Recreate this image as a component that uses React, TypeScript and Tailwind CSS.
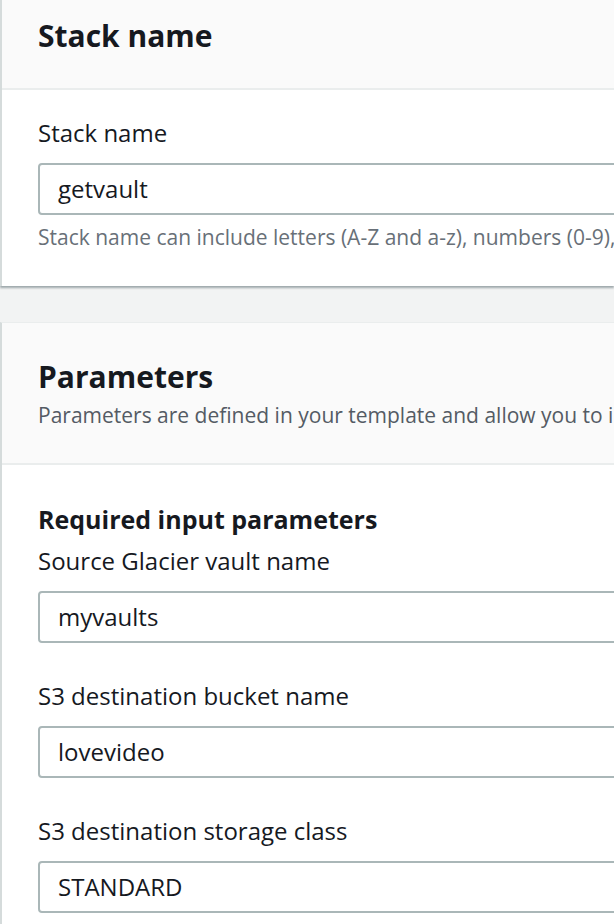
import React from 'react';

const font = { fontFamily: '"Open Sans", "Noto Sans", Arial, sans-serif' };

const Input: React.FC<{ value: string }> = ({ value }) => (
  <div className="mt-[15px] h-[52px] w-[600px] rounded-[4px] border-2 border-[#aab7b8] bg-white pl-[18px] flex items-center text-[24px] text-[#16191f]">
    {value}
  </div>
);

const Field: React.FC<{ label: string; value: string; className?: string }> = ({ label, value, className }) => (
  <div className={className}>
    <div className="text-[24px] leading-[30px] text-[#16191f] whitespace-nowrap">{label}</div>
    <Input value={value} />
  </div>
);

export default function App() {
  return (
    <div className="min-h-[924px] w-[614px] overflow-hidden bg-[#f2f3f3]" style={font}>
      {/* Stack name */}
      <section className="bg-white border-l-2 border-[#d5dbdb] shadow-[0_2px_2px_rgba(0,28,36,0.35)]">
        <div className="h-[90px] bg-[#fafafa] border-b-2 border-[#eaeded] pl-[36px] pt-[18px]">
          <h2 className="text-[30px] font-bold leading-[36px] text-[#16191f] whitespace-nowrap">Stack name</h2>
        </div>
        <div className="pl-[36px] pt-[28px] pb-[35px]">
          <Field label="Stack name" value="getvault" />
          <p className="mt-[8px] text-[21px] leading-[28px] text-[#687078] whitespace-nowrap">
            Stack name can include letters (A-Z and a-z), numbers (0-9), and dashes (-).
          </p>
        </div>
      </section>

      {/* Parameters */}
      <section className="mt-[36px] bg-white border-l-2 border-t border-[#d5dbdb] border-t-[#eaeded]">
        <div className="h-[142px] bg-[#fafafa] border-b-2 border-[#eaeded] pl-[36px] pt-[36px]">
          <h2 className="text-[30px] font-bold leading-[36px] text-[#16191f] whitespace-nowrap">Parameters</h2>
          <p className="mt-[6px] text-[21px] leading-[28px] text-[#545b64] whitespace-nowrap">
            Parameters are defined in your template and allow you to input custom values when you create or update a stack.
          </p>
        </div>
        <div className="pl-[36px] pt-[39px] pb-[20px]">
          <h3 className="text-[25px] font-bold leading-[30px] text-[#16191f] whitespace-nowrap">Required input parameters</h3>
          <Field className="mt-[12px]" label="Source Glacier vault name" value="myvaults" />
          <Field className="mt-[38px]" label="S3 destination bucket name" value="lovevideo" />
          <Field className="mt-[38px]" label="S3 destination storage class" value="STANDARD" />
        </div>
      </section>
    </div>
  );
}
